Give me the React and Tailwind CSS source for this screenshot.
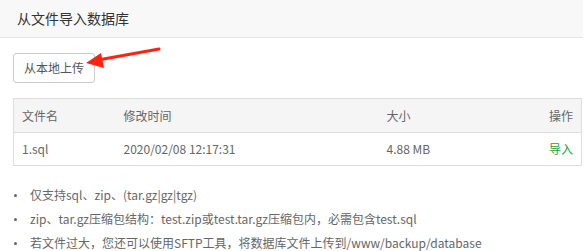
import React from 'react';

const notes = [
  '仅支持sql、zip、(tar.gz|gz|tgz)',
  'zip、tar.gz压缩包结构：test.zip或test.tar.gz压缩包内，必需包含test.sql',
  '若文件过大，您还可以使用SFTP工具，将数据库文件上传到/www/backup/database',
];

export default function App() {
  return (
    <div
      className="relative w-[586px] h-[251px] bg-white overflow-hidden text-[#666]"
      style={{ fontFamily: '"Noto Sans CJK SC", "Noto Sans", sans-serif' }}
    >
      {/* Title bar */}
      <div className="h-[38px] flex items-center pl-[17px] pb-[1px] bg-[#f8f8f8] border-b border-[#e6e6e6] text-[14px] text-[#333] mr-[3px]">
        从文件导入数据库
      </div>

      <div className="pl-[13px] pr-[4px]">
        <button className="mt-[15px] h-[30px] px-[10px] border border-[#ccc] rounded-[3px] bg-white text-[12px] text-[#555]">
          从本地上传
        </button>

        {/* File table */}
        <table className="mt-[15px] w-[569px] border border-[#ddd] text-[12px] text-[#666] border-collapse">
          <thead>
            <tr className="h-[34px] bg-[#f5f5f5] border-b border-[#ddd]">
              <th className="text-left font-normal pl-[8px] w-[110px]">文件名</th>
              <th className="text-left font-normal">修改时间</th>
              <th className="text-left font-normal w-[135px]">大小</th>
              <th className="text-right font-normal pr-[8px] w-[60px]">操作</th>
            </tr>
          </thead>
          <tbody>
            <tr className="h-[33px]">
              <td className="pl-[8px]">1.sql</td>
              <td>2020/02/08 12:17:31</td>
              <td>4.88 MB</td>
              <td className="text-right pr-[8px] text-[#20a53a]">导入</td>
            </tr>
          </tbody>
        </table>

        {/* Notes */}
        <ul className="mt-[17px] text-[12px] text-[#666]">
          {notes.map((n) => (
            <li key={n} className="flex items-center h-[24px]">
              <span className="w-[3px] h-[3px] rounded-full bg-[#666] ml-[1px] mr-[13px]" />
              {n}
            </li>
          ))}
        </ul>
      </div>

      {/* Annotation arrow */}
      <svg className="absolute left-0 top-0 pointer-events-none" width="586" height="251">
        <line x1="159" y1="49" x2="98" y2="60" stroke="#f21" strokeWidth="3" strokeLinecap="round" />
        <polygon points="86,63 101,53 104,68" fill="#f21" />
      </svg>
    </div>
  );
}
